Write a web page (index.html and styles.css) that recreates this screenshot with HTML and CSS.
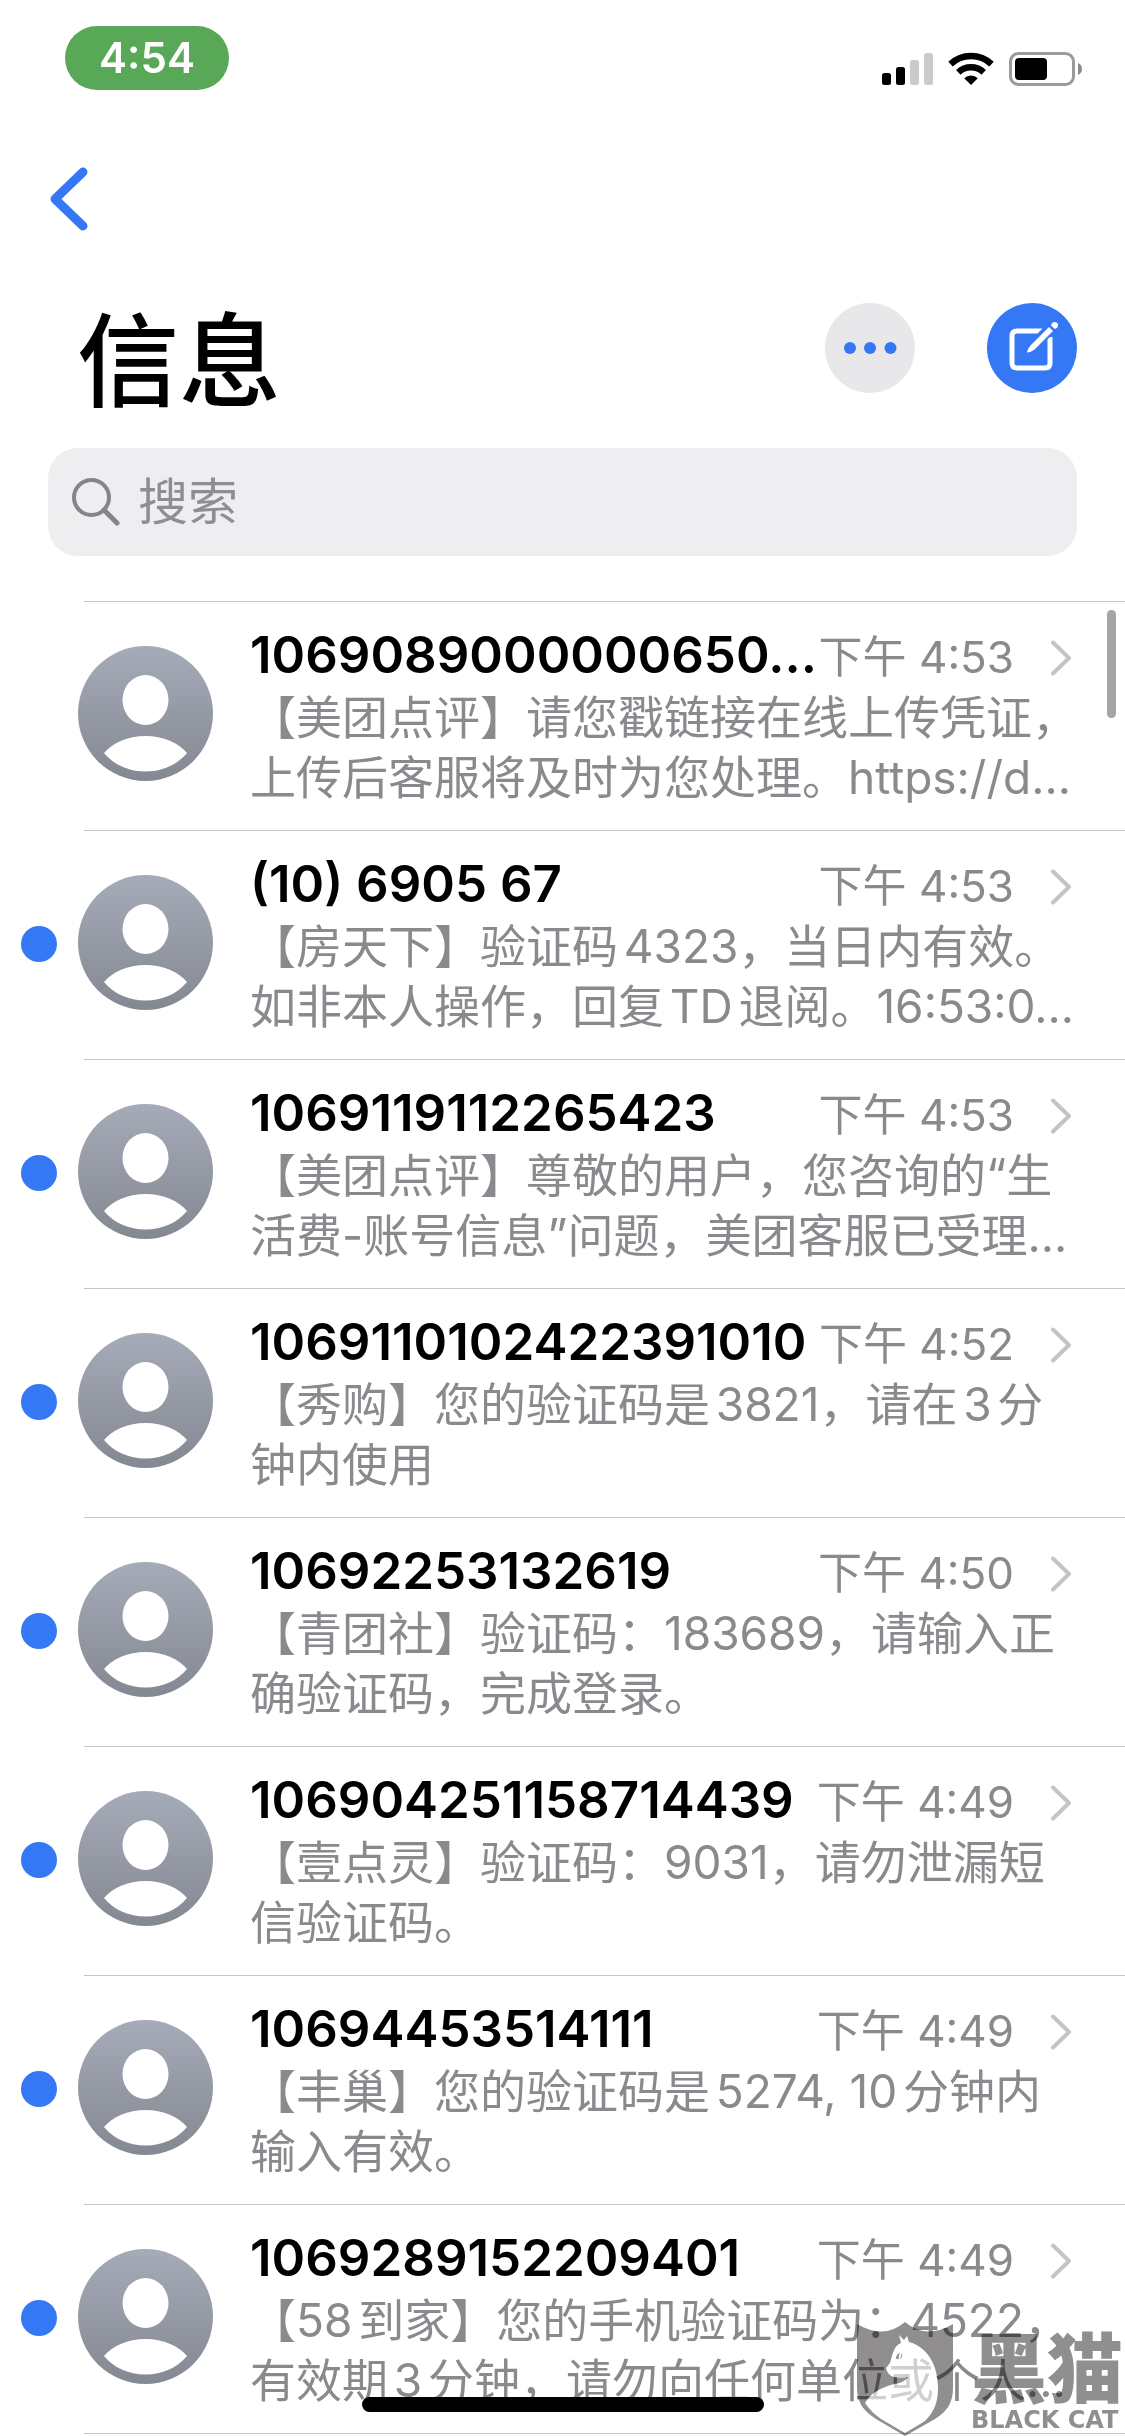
FILE: index.html
```html
<!DOCTYPE html>
<html lang="zh-CN">
<head>
  <meta charset="UTF-8" />
  <meta name="viewport" content="width=device-width, initial-scale=1" />
  <title>信息</title>
  <link rel="stylesheet" href="styles.css">
</head>
<body>
  <!-- 列表中重复使用的图标 -->
  <svg class="defs" width="0" height="0" aria-hidden="true">
    <defs>
      <linearGradient id="avatarFill" x1="0" y1="0" x2="0" y2="1">
        <stop offset="0" stop-color="#a6abb9" />
        <stop offset="1" stop-color="#848891" />
      </linearGradient>
      <symbol id="avatar" viewBox="0 0 135 135">
        <circle cx="67.5" cy="67.5" r="67.5" fill="url(#avatarFill)" />
        <ellipse cx="67.5" cy="54" rx="23" ry="25" fill="#fff" />
        <path d="M26 107C34 97 50 90 67.5 90S101 97 109 107C99 119 84 125.5 67.5 125.5S36 119 26 107Z" fill="#fff" />
      </symbol>
      <symbol id="chevron" viewBox="0 0 22 36">
        <path d="M3 2.5L19 18L3 33.5" fill="none" stroke="#c4c4c6" stroke-width="4" stroke-linecap="round" stroke-linejoin="round" />
      </symbol>
    </defs>
  </svg>

  <div class="status-bar">
    <span class="clock">4:54</span>
    <div class="status-icons">
      <svg width="51" height="34" viewBox="0 0 51 34" aria-hidden="true">
        <rect x="0" y="21" width="9" height="12" rx="2.5" />
        <rect x="14" y="15" width="9" height="18" rx="2.5" />
        <rect x="28" y="8" width="9" height="25" rx="2.5" fill="#cbcbcb" />
        <rect x="42" y="1" width="9" height="32" rx="2.5" fill="#cbcbcb" />
      </svg>
      <svg width="46" height="34" viewBox="0 0 46 34" aria-hidden="true">
        <g fill="none" stroke="#000" stroke-width="6.5">
          <path d="M2.5 12.2A30 30 0 0 1 43.5 12.2" />
          <path d="M10.3 20.4A18.5 18.5 0 0 1 35.7 20.4" />
        </g>
        <path d="M23 33L16.2 26.3A9.8 9.8 0 0 1 29.8 26.3Z" />
      </svg>
      <svg width="73" height="34" viewBox="0 0 73 34" aria-hidden="true">
        <rect x="1.5" y="1.5" width="63" height="31" rx="8" fill="none" stroke="#9b9b9b" stroke-width="3" />
        <rect x="6" y="6" width="32" height="22" rx="4" />
        <path d="M69 11C71.5 12 73 14.2 73 17S71.5 22 69 23Z" fill="#8c8c8c" />
      </svg>
    </div>
  </div>

  <header>
    <div class="nav">
      <button class="back" aria-label="返回">
        <svg width="38" height="64" viewBox="0 0 38 64">
          <path d="M33 5L5 32L33 59" fill="none" stroke="#3478f6" stroke-width="9" stroke-linecap="round" stroke-linejoin="round" />
        </svg>
      </button>
    </div>

    <div class="title-row">
      <h1>信息</h1>
      <button class="round more" aria-label="更多">
        <svg width="90" height="90" viewBox="0 0 90 90" fill="#3478f6">
          <circle cx="25" cy="45" r="6" />
          <circle cx="45" cy="45" r="6" />
          <circle cx="65.5" cy="45" r="6" />
        </svg>
      </button>
      <button class="round compose" aria-label="新信息">
        <svg width="90" height="90" viewBox="0 0 90 90">
          <path d="M55 28H30Q25 28 25 33V60Q25 65 30 65H58Q63 65 63 60V34" fill="none" stroke="#fff" stroke-width="5" />
          <path d="M44 45L65 24" stroke="#3478f6" stroke-width="11" />
          <path d="M62 24L66 28L47.5 46.5Q44 49 41 49.5Q39.8 49.5 40.3 48Q41.5 44.5 43.5 42.5Z" fill="#fff" />
          <path d="M64 22.5Q64.5 19 68 19Q71.5 19.5 71 23Q70.5 25.5 67.8 26Z" fill="#fff" />
        </svg>
      </button>
    </div>

    <div class="search">
      <svg width="48" height="48" viewBox="0 0 48 48" aria-hidden="true">
        <circle cx="19.5" cy="19.5" r="17.5" fill="none" stroke="#858589" stroke-width="4" />
        <path d="M32 32L45 45" stroke="#858589" stroke-width="5" stroke-linecap="round" />
      </svg>
      <input type="search" placeholder="搜索" aria-label="搜索" />
    </div>
  </header>

  <ul class="messages">
    <li class="message">
      <svg class="avatar"><use href="#avatar" /></svg>
      <div class="content">
        <div class="top">
          <h2>1069089000000650…</h2>
          <time>下午 4:53</time>
          <svg class="chevron"><use href="#chevron" /></svg>
        </div>
        <p>【美团点评】请您戳链接在线上传凭证，上传后客服将及时为您处理。https://d…</p>
      </div>
    </li>
    <li class="message unread">
      <svg class="avatar"><use href="#avatar" /></svg>
      <div class="content">
        <div class="top">
          <h2>(10) 6905 67</h2>
          <time>下午 4:53</time>
          <svg class="chevron"><use href="#chevron" /></svg>
        </div>
        <p>【房天下】验证码4323，当日内有效。如非本人操作，回复TD退阅。16:53:0…</p>
      </div>
    </li>
    <li class="message unread">
      <svg class="avatar"><use href="#avatar" /></svg>
      <div class="content">
        <div class="top">
          <h2>1069119112265423</h2>
          <time>下午 4:53</time>
          <svg class="chevron"><use href="#chevron" /></svg>
        </div>
        <p>【美团点评】尊敬的用户，您咨询的“生活费-账号信息”问题，美团客服已受理…</p>
      </div>
    </li>
    <li class="message unread">
      <svg class="avatar"><use href="#avatar" /></svg>
      <div class="content">
        <div class="top">
          <h2>1069110102422391010</h2>
          <time>下午 4:52</time>
          <svg class="chevron"><use href="#chevron" /></svg>
        </div>
        <p>【秀购】您的验证码是3821，请在3分钟内使用</p>
      </div>
    </li>
    <li class="message unread">
      <svg class="avatar"><use href="#avatar" /></svg>
      <div class="content">
        <div class="top">
          <h2>10692253132619</h2>
          <time>下午 4:50</time>
          <svg class="chevron"><use href="#chevron" /></svg>
        </div>
        <p>【青团社】验证码：183689，请输入正确验证码，完成登录。</p>
      </div>
    </li>
    <li class="message unread">
      <svg class="avatar"><use href="#avatar" /></svg>
      <div class="content">
        <div class="top">
          <h2>106904251158714439</h2>
          <time>下午 4:49</time>
          <svg class="chevron"><use href="#chevron" /></svg>
        </div>
        <p>【壹点灵】验证码：9031，请勿泄漏短信验证码。</p>
      </div>
    </li>
    <li class="message unread">
      <svg class="avatar"><use href="#avatar" /></svg>
      <div class="content">
        <div class="top">
          <h2>10694453514111</h2>
          <time>下午 4:49</time>
          <svg class="chevron"><use href="#chevron" /></svg>
        </div>
        <p>【丰巢】您的验证码是5274, 10分钟内输入有效。</p>
      </div>
    </li>
    <li class="message unread">
      <svg class="avatar"><use href="#avatar" /></svg>
      <div class="content">
        <div class="top">
          <h2>1069289152209401</h2>
          <time>下午 4:49</time>
          <svg class="chevron"><use href="#chevron" /></svg>
        </div>
        <p>【58到家】您的手机验证码为：4522，有效期3分钟，请勿向任何单位或个人…</p>
      </div>
    </li>
  </ul>

  <div class="scrollbar"></div>
  <div class="home-indicator"></div>

  <!-- 黑猫水印 -->
  <div class="watermark">
    <svg width="98" height="114" viewBox="0 0 98 114" aria-hidden="true">
      <path class="cat" d="M43 13L45 21C38 23 36 34 34 41L30 46Q32 54 38 55Q45 56 52 55Q48 61 38 62C27 65 15 70 9 81Q15 90 25 97L49 111L69 99C79 89 82 79 82 66C82 44 72 25 53 20L51 14L48 18Z" />
      <path class="shield" fill-rule="evenodd" d="M1 2Q28 18 49 0Q70 18 97 2V66C97 82 90 90 79 97L49 114L20 97C8 89 1 81 1 66ZM43 13L45 21C38 23 36 34 34 41L30 46Q32 54 38 55Q45 56 52 55Q48 61 38 62C27 65 15 70 9 81Q15 90 25 97L49 111L69 99C79 89 82 79 82 66C82 44 72 25 53 20L51 14L48 18Z" />
      <path class="shield" d="M40 37Q40 32 44 31Q42 34 43 37ZM44 36Q46 34 45 31Q48 34 44 37Z" />
    </svg>
    <div class="brand">
      <span class="brand-cn">黑猫</span>
      <span class="brand-en">BLACK CAT</span>
    </div>
  </div>
</body>
</html>
```

FILE: styles.css
```css
* {
  box-sizing: border-box;
}

body {
  position: relative;
  margin: 0;
  min-height: 100vh;
  background: #fff;
  color: #000;
  font-family: Inter, "Noto Sans CJK SC", sans-serif;
  overflow-x: hidden;
}

button {
  padding: 0;
  border: none;
  background: none;
  cursor: pointer;
}

svg {
  display: block;
  flex-shrink: 0;
}

.defs {
  position: absolute;
}

.status-bar {
  display: flex;
  justify-content: space-between;
  padding: 26px 43px 26px 65px;
}

.clock {
  width: 164px;
  height: 64px;
  line-height: 64px;
  border-radius: 32px;
  background: #58a858;
  color: #fff;
  font-size: 42px;
  font-weight: 600;
  text-align: center;
}

.status-icons {
  display: flex;
  gap: 15px;
  padding-top: 26px;
}

.nav {
  display: flex;
  align-items: center;
  height: 166px;
  padding-left: 50px;
}

.title-row {
  display: flex;
  align-items: center;
  gap: 72px;
  height: 132px;
  padding: 0 48px 0 77px;
}

h1 {
  flex: 1;
  margin: 0;
  padding-top: 28px;
  font-size: 102px;
  font-weight: 500;
  line-height: 108px;
}

.round {
  width: 90px;
  height: 90px;
  border-radius: 50%;
}

.more {
  background: #e8e8ea;
}

.compose {
  background: #3478f6;
}

.search {
  display: flex;
  align-items: center;
  gap: 18px;
  height: 108px;
  margin: 34px 48px 45px;
  padding: 0 24px;
  border-radius: 30px;
  background: #eeeef0;
}

.search input {
  flex: 1;
  min-width: 0;
  padding: 0;
  border: none;
  outline: none;
  background: none;
  font-family: inherit;
  font-size: 50px;
}

.search input::placeholder {
  color: #8e8e92;
}

.messages {
  margin: 0;
  padding: 0;
  list-style: none;
}

.message {
  position: relative;
  display: flex;
  gap: 37px;
  height: 229px;
  padding: 22px 44px 0 78px;
}

/* 分隔线从头像处开始 */
.message::before,
.message:last-child::after {
  content: "";
  position: absolute;
  top: 0;
  left: 84px;
  right: 0;
  height: 1px;
  background: #c6c6c8;
}

.message:last-child {
  height: 232px;
}

.message:last-child::after {
  top: 229px;
}

/* 未读圆点 */
.unread .content::before {
  content: "";
  position: absolute;
  top: 96px;
  left: 21px;
  width: 36px;
  height: 36px;
  border-radius: 50%;
  background: #3478f6;
}

.avatar {
  width: 135px;
  height: 135px;
  margin-top: 23px;
}

.content {
  flex: 1;
  min-width: 0;
}

.top {
  display: flex;
  align-items: center;
  height: 64px;
  padding-right: 9px;
}

h2 {
  flex: 1;
  margin: 0;
  font-size: 51px;
  font-weight: 600;
  line-height: 64px;
  white-space: nowrap;
}

time {
  margin-right: 36px;
  padding-top: 3px;
  color: #8a8a8e;
  font-size: 44px;
  line-height: 64px;
  white-space: nowrap;
}

.chevron {
  width: 22px;
  height: 36px;
  margin-top: 6px;
}

p {
  margin: 0;
  color: #8a8a8e;
  font-size: 46px;
  line-height: 60px;
  text-autospace: normal;
  word-break: break-all;
}

.scrollbar {
  position: absolute;
  top: 610px;
  right: 9px;
  width: 9px;
  height: 108px;
  border-radius: 5px;
  background: #a5a5a5;
}

.home-indicator {
  position: absolute;
  bottom: 24px;
  left: 50%;
  width: 402px;
  height: 15px;
  margin-left: -201px;
  border-radius: 8px;
  background: #000;
}

.watermark {
  position: absolute;
  right: 2px;
  bottom: 0;
  display: flex;
  gap: 17px;
}

.cat {
  fill: #fff;
  opacity: 0.6;
}

.shield {
  fill: #918e8f;
  mix-blend-mode: multiply;
}

.brand {
  display: flex;
  flex-direction: column;
  color: #918e8f;
  mix-blend-mode: multiply;
}

.brand-cn {
  font-family: "Noto Sans CJK SC", sans-serif;
  font-size: 76px;
  font-weight: 900;
  line-height: 84px;
}

.brand-en {
  font-family: "DejaVu Sans", sans-serif;
  font-size: 24px;
  font-weight: 700;
  line-height: 28px;
}
```
